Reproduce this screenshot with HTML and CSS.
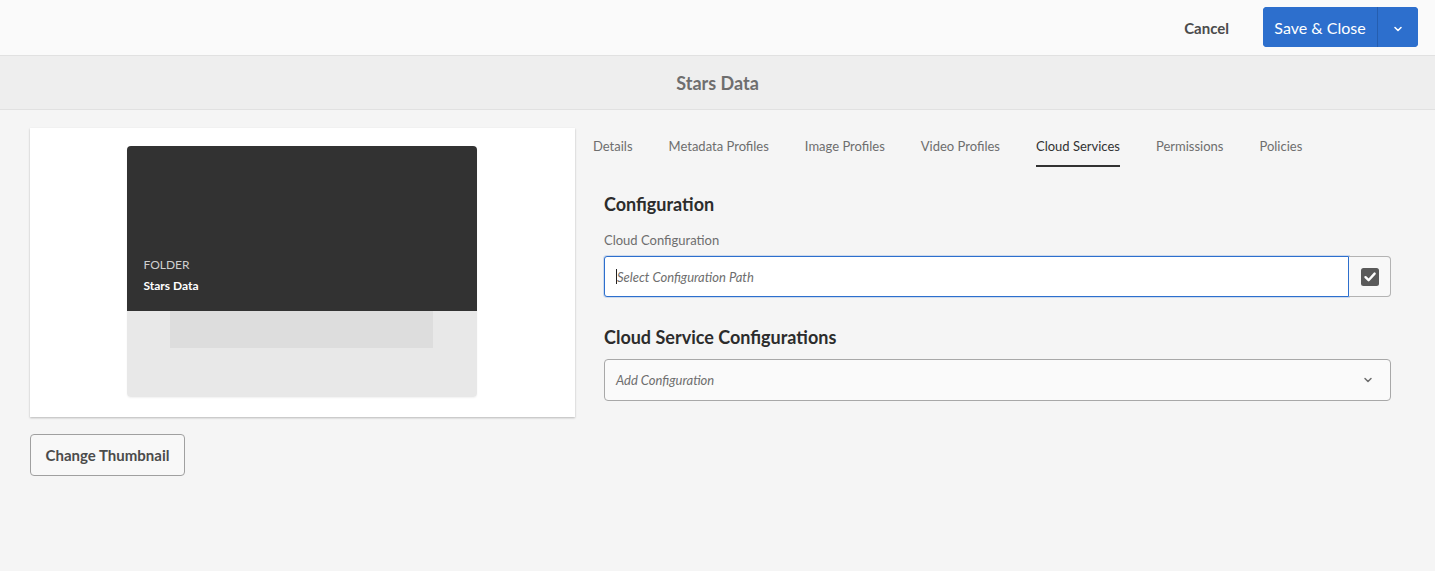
FILE: index.html
```html
<!DOCTYPE html>
<html>
<head>
<meta charset="utf-8">
<link rel="stylesheet" href="styles.css">
</head>
<body>
<header class="topbar">
  <button class="btn-quiet">Cancel</button>
  <div class="split">
    <button class="split-main">Save &amp; Close</button>
    <button class="split-arrow"><svg width="10" height="10" viewBox="0 0 10 10"><path d="M2 3.5 L5 6.5 L8 3.5" fill="none" stroke="#fff" stroke-width="1.6" stroke-linecap="round" stroke-linejoin="round"/></svg></button>
  </div>
</header>
<div class="titlebar">Stars Data</div>
<main class="content">
  <section class="left">
    <div class="card">
      <div class="thumb">
        <div class="thumb-top">
          <div class="thumb-kind">FOLDER</div>
          <div class="thumb-name">Stars Data</div>
        </div>
        <div class="thumb-bottom"><div class="thumb-inner"></div></div>
      </div>
    </div>
    <button class="btn-secondary">Change Thumbnail</button>
  </section>
  <section class="right">
    <nav class="tabs">
      <span class="tab">Details</span>
      <span class="tab">Metadata Profiles</span>
      <span class="tab">Image Profiles</span>
      <span class="tab">Video Profiles</span>
      <span class="tab active">Cloud Services</span>
      <span class="tab">Permissions</span>
      <span class="tab">Policies</span>
    </nav>
    <div class="panel">
      <h2 class="heading">Configuration</h2>
      <label class="label">Cloud Configuration</label>
      <div class="pathfield">
        <div class="path-input"><span class="caret"></span><span class="placeholder">Select Configuration Path</span></div>
        <button class="path-btn"><svg width="18" height="18" viewBox="0 0 18 18"><rect x="0" y="0" width="18" height="18" rx="2.5" fill="#5a5a5a"/><path d="M4.5 9.2 L7.6 12.2 L13.6 5.6" fill="none" stroke="#fff" stroke-width="2.4" stroke-linecap="round" stroke-linejoin="round"/></svg></button>
      </div>
      <h2 class="heading heading2">Cloud Service Configurations</h2>
      <div class="select">
        <span class="placeholder">Add Configuration</span>
        <svg width="10" height="10" viewBox="0 0 10 10"><path d="M2 3.5 L5 6.5 L8 3.5" fill="none" stroke="#6e6e6e" stroke-width="1.5" stroke-linecap="round" stroke-linejoin="round"/></svg>
      </div>
    </div>
  </section>
</main>
</body>
</html>
```
FILE: styles.css
```css
* { box-sizing: border-box; }
html, body { margin: 0; padding: 0; }
body {
  background: #f5f5f5;
  font-family: Lato, "Open Sans", sans-serif;
  color: #323232;
  width: 1435px;
  height: 571px;
  overflow: hidden;
}
button { font-family: inherit; cursor: pointer; }

.topbar {
  height: 56px;
  background: #fafafa;
  border-bottom: 1px solid #e1e1e1;
  display: flex;
  align-items: center;
  justify-content: flex-end;
  padding-right: 17px;
  gap: 34px;
}
.btn-quiet {
  background: none;
  border: none;
  font-size: 15px;
  font-weight: 700;
  color: #4b4b4b;
  padding: 0;
  margin-top: 1px;
}
.split {
  display: flex;
  height: 40px;
  margin-top: -1px;
  border-radius: 4px;
  overflow: hidden;
  background: #2d6fcd;
}
.split-main {
  background: #2d6fcd;
  color: #fff;
  border: none;
  font-size: 16px;
  padding: 0;
  width: 115px;
  white-space: nowrap;
  border-right: 1px solid #255eb0;
}
.split-arrow {
  background: #2d6fcd;
  border: none;
  width: 40px;
  display: flex;
  align-items: center;
  justify-content: center;
  padding: 4px 0 0;
}

.titlebar {
  height: 54px;
  background: #eeeeee;
  border-bottom: 1px solid #e1e1e1;
  display: flex;
  align-items: center;
  justify-content: center;
  font-size: 18px;
  font-weight: 700;
  color: #6e6e6e;
}

.content {
  display: flex;
  padding: 18px 0 0 30px;
  gap: 18px;
}
.left { width: 545px; }
.card {
  background: #fff;
  height: 289px;
  box-shadow: 0 1px 2px rgba(0,0,0,0.25);
  display: flex;
  justify-content: center;
  padding-top: 18px;
  padding-right: 2px;
}
.thumb {
  width: 350px;
  height: 251px;
  border-radius: 4px;
  overflow: hidden;
  display: flex;
  flex-direction: column;
  box-shadow: 0 1px 2px rgba(0,0,0,0.06);
}
.thumb-top {
  height: 165px;
  background: #323232;
  display: flex;
  flex-direction: column;
  justify-content: flex-end;
  padding: 0 0 18px 17px;
}
.thumb-kind { font-size: 12px; color: #cfcfcf; margin-bottom: 6px; }
.thumb-name { font-size: 12px; font-weight: 700; color: #fff; }
.thumb-bottom {
  flex: 1;
  background: #e8e8e8;
  padding: 0 44px 0 43px;
}
.thumb-inner { height: 37px; background: #dddddd; }

.btn-secondary {
  margin-top: 17px;
  height: 42px;
  width: 155px;
  background: #f8f8f8;
  border: 1px solid #a0a0a0;
  border-radius: 4px;
  font-size: 15px;
  font-weight: 700;
  color: #4b4b4b;
  padding: 0;
}

.right { width: 800px; }
.tabs {
  display: flex;
  gap: 36px;
  height: 39px;
}
.tab {
  font-size: 13px;
  color: #6e6e6e;
  padding-top: 10px;
  height: 39px;
  border-bottom: 2px solid transparent;
}
.tab.active { color: #323232; border-bottom-color: #323232; }

.panel { padding-left: 11px; }
.heading {
  margin: 25px 0 0;
  font-size: 18px;
  font-weight: 700;
  color: #2c2c2c;
  line-height: 24px;
}
.label {
  display: block;
  margin-top: 15px;
  font-size: 13px;
  color: #6e6e6e;
  line-height: 18px;
}
.pathfield {
  display: flex;
  margin-top: 7px;
  height: 41px;
  width: 787px;
}
.path-input {
  flex: 1;
  background: #fff;
  border: 1px solid #2d6fcd;
  box-shadow: 0 0 0 1px rgba(45,111,205,0.2);
  border-radius: 3px 0 0 3px;
  display: flex;
  align-items: center;
  padding-left: 11px;
}
.caret { width: 1px; height: 15px; background: #222; margin-right: 0; }
.placeholder { font-size: 13px; font-style: italic; color: #6e6e6e; }
.path-btn {
  width: 42px;
  border: 1px solid #b3b3b3;
  border-left: none;
  border-radius: 0 4px 4px 0;
  background: #f8f8f8;
  display: flex;
  align-items: center;
  justify-content: center;
  padding: 0;
}
.heading2 { margin-top: 28px; }
.select {
  margin-top: 10px;
  width: 787px;
  height: 42px;
  border: 1px solid #a8a8a8;
  border-radius: 4px;
  background: #fafafa;
  display: flex;
  align-items: center;
  justify-content: space-between;
  padding: 0 17px 0 11px;
}
```
